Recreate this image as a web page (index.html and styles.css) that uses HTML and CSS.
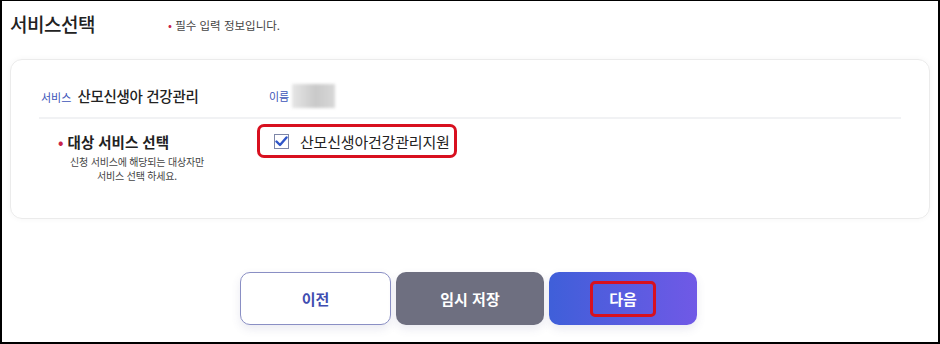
FILE: index.html
```html
<!DOCTYPE html>
<html lang="ko">
<head>
<meta charset="utf-8">
<link rel="stylesheet" href="styles.css">
</head>
<body>
<div class="frame">
  <div class="header">
    <h1 class="title">서비스선택</h1>
    <p class="req"><span class="dot">•</span> 필수 입력 정보입니다.</p>
  </div>
  <div class="card">
    <div class="row-info">
      <div class="svc"><span class="lbl">서비스</span><span class="svc-name">산모신생아 건강관리</span></div>
      <div class="name"><span class="lbl">이름</span><span class="blur"></span></div>
    </div>
    <div class="divider"></div>
    <div class="row-select">
      <div class="sel-left">
        <div class="sel-title"><span class="dot">•</span> 대상 서비스 선택</div>
        <div class="sel-desc">신청 서비스에 해당되는 대상자만<br>서비스 선택 하세요.</div>
      </div>
      <label class="check-item">
        <span class="cbox">
          <svg width="13" height="11" viewBox="0 0 13 11"><path d="M1.5 5.5 L5 9 L11.5 1.5" fill="none" stroke="#2f55c8" stroke-width="2.4" stroke-linecap="round" stroke-linejoin="round"/></svg>
        </span>
        <span class="check-text">산모신생아건강관리지원</span>
      </label>
    </div>
  </div>
  <div class="actions">
    <button class="btn btn-prev">이전</button>
    <button class="btn btn-save">임시 저장</button>
    <button class="btn btn-next"><span class="mark">다음</span></button>
  </div>
</div>
</body>
</html>
```

FILE: styles.css
```css
* { box-sizing: border-box; }
html, body { margin: 0; padding: 0; background: #fff; }
body { font-family: "Noto Sans CJK KR", "Noto Sans", sans-serif; color: #222; }
.frame {
  width: 940px;
  height: 344px;
  border-top: 1px solid #000;
  border-left: 2px solid #000;
  border-right: 2px solid #000;
  border-bottom: 2px solid #000;
  padding: 0 8px;
  overflow: hidden;
}
.header { display: flex; align-items: center; height: 44px; }
.title { margin: 0; font-size: 19px; font-weight: 500; width: 158px; letter-spacing: -0.5px; color: #222; }
.req { margin: 0; font-size: 11.5px; color: #444; padding-top: 4px; }
.dot { color: #c8234a; }
.card {
  margin-top: 14px;
  height: 160px;
  border: 1px solid #ebebeb;
  border-radius: 12px;
  box-shadow: 0 0 6px rgba(0,0,0,0.04);
  padding: 0 28px;
}
.row-info { display: flex; align-items: center; height: 57px; padding: 14px 0 0 2px; }
.svc { width: 228px; display: flex; align-items: baseline; }
.lbl { font-size: 11px; color: #3d55b8; margin-right: 6px; }
.svc-name { font-size: 14.5px; font-weight: 500; color: #222; letter-spacing: -0.3px; }
.name { display: flex; align-items: center; }
.name .lbl { margin-right: 3px; }
.blur { display: inline-block; width: 43px; height: 24px; background: linear-gradient(90deg, #e6e6e6, #c9c9c9 55%, #d8d8d8); filter: blur(1.5px); }
.divider { height: 2px; background: #f1f2f4; }
.row-select { display: flex; padding-top: 5px; }
.sel-left { width: 217px; padding-top: 7px; }
.sel-title { font-size: 14.5px; font-weight: 700; padding-left: 19px; color: #222; }
.sel-desc { width: 196px; text-align: center; font-size: 10px; line-height: 14px; color: #444; padding-top: 3px; letter-spacing: -0.2px; }
.check-item {
  display: flex; align-items: center;
  width: 200px; height: 34px;
  border: 3px solid #d8101f;
  border-radius: 7px;
  padding-left: 14px;
  margin-left: 1px;
}
.cbox { width: 15px; height: 15px; border: 1px solid #7d86a8; display: flex; align-items: center; justify-content: center; margin-right: 11px; }
.check-text { font-size: 15px; color: #222; letter-spacing: -0.2px; }
.actions { display: flex; justify-content: center; gap: 5px; margin-top: 53px; padding-right: 3px; }
.btn {
  width: 149px; height: 53px;
  border-radius: 10px;
  font-family: inherit; font-size: 15px; font-weight: 700;
  border: none;
  display: flex; align-items: center; justify-content: center;
  box-shadow: 0 4px 10px rgba(80,80,140,0.12);
}
.btn-prev { background: #fff; border: 1px solid #8a8fc4; color: #3f4db0; width: 151px; }
.btn-save { background: #6e6f80; color: #fff; width: 148px; }
.btn-next { background: linear-gradient(90deg, #3f5fd9, #7059e6); color: #fff; width: 148px; }
.mark { display: flex; align-items: center; justify-content: center; width: 66px; height: 36px; border: 3px solid #d8101f; border-radius: 5px; }
```
